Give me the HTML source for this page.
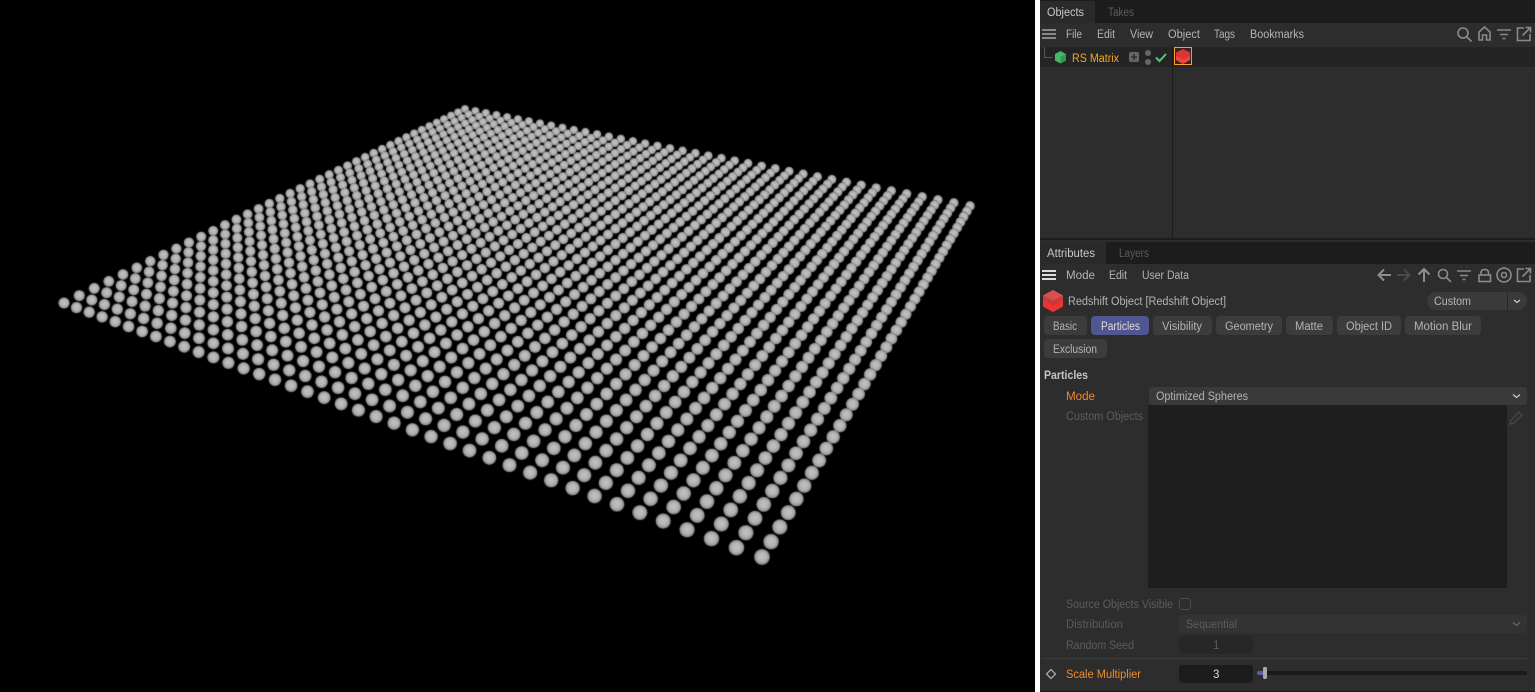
<!DOCTYPE html>
<html><head><meta charset="utf-8"><title>Redshift Matrix</title>
<style>
html,body{margin:0;padding:0;width:1535px;height:692px;overflow:hidden;background:#fff}
#c{position:absolute;left:0;top:0;width:1035px;height:692px;background:#000;display:block}
#p{position:absolute;left:1040px;top:0}
text{font-family:"Liberation Sans",sans-serif;font-size:11.5px;fill:#b4b4b4}
.d{fill:#5c5c5c}
.o{fill:#f08a2c}
.i{fill:none;stroke:#8a8a8a;stroke-width:1.6}
</style></head>
<body>
<canvas id="c" width="1035" height="692"></canvas>
<svg id="p" width="495" height="692" viewBox="1040 0 495 692" xmlns="http://www.w3.org/2000/svg">
<rect x="1040" y="0" width="495" height="692" fill="#2d2d2d"/>
<rect x="1040" y="0" width="495" height="23" fill="#1c1c1c"/>
<rect x="1040" y="1" width="55" height="22" fill="#2a2a2a"/>
<text x="1047" y="16" textLength="37" lengthAdjust="spacingAndGlyphs" style="fill:#c8c8c8">Objects</text>
<text x="1108" y="16" textLength="26" lengthAdjust="spacingAndGlyphs" class="d">Takes</text>
<rect x="1042" y="29" width="14" height="2" fill="#888"/><rect x="1042" y="33" width="14" height="2" fill="#888"/><rect x="1042" y="37" width="14" height="2" fill="#888"/>
<text x="1066" y="38" textLength="16" lengthAdjust="spacingAndGlyphs">File</text>
<text x="1097" y="38" textLength="18" lengthAdjust="spacingAndGlyphs">Edit</text>
<text x="1130" y="38" textLength="23" lengthAdjust="spacingAndGlyphs">View</text>
<text x="1168" y="38" textLength="32" lengthAdjust="spacingAndGlyphs">Object</text>
<text x="1214" y="38" textLength="21" lengthAdjust="spacingAndGlyphs">Tags</text>
<text x="1250" y="38" textLength="54" lengthAdjust="spacingAndGlyphs">Bookmarks</text>
<circle cx="1463" cy="33" r="5" class="i"/><path d="M1467 37l4.5 4.5" class="i" stroke-width="2"/>
<path d="M1479 40v-8l5.500-5 5.500 5v8h-3.500v-5h-4v5z" class="i"/>
<path d="M1497 30h14M1500 34.500h8M1502.500 38.500h3" class="i" stroke-width="2"/>
<path d="M1524 28h-6.500v12.500h12.500v-6.500M1522.500 35.500l8-8M1525.500 27.500h5v5" class="i"/>

<rect x="1040" y="47" width="495" height="20" fill="#242424"/>
<path d="M1044.500 47v10.500h8" fill="none" stroke="#555" stroke-width="1"/>
<path d="M1060.500 51l5.500 3v6.500l-5.500 3-5.500-3V54z" fill="#45b868"/><path d="M1060.500 57v6.500l5.500-3V54z" fill="#2f9a50"/>
<text x="1072" y="62" textLength="47" lengthAdjust="spacingAndGlyphs" style="fill:#f5a81f">RS Matrix</text>
<rect x="1129" y="52" width="10" height="10" rx="2" fill="#666"/><path d="M1134 54v6M1131 57h6" stroke="#2d2d2d" stroke-width="1.500"/>
<circle cx="1148" cy="53" r="3" fill="#666"/><circle cx="1148" cy="62" r="3" fill="#666"/>
<path d="M1156 57.500l3.500 3.500 6.500-7" fill="none" stroke="#53c878" stroke-width="2"/>
<rect x="1172" y="45" width="1" height="193" fill="#1c1c1c"/>
<rect x="1174.500" y="47.500" width="17" height="17" fill="#3a2418" stroke="#f0a030" stroke-width="1"/>
<path d="M1183 49l7 3.500v7.500l-7 4-7-4v-7.500z" fill="#d93535"/><path d="M1176 56l7 3.500 7-3.500v4l-7 4-7-4z" fill="#f04444"/>

<rect x="1040" y="238" width="495" height="2" fill="#1c1c1c"/>
<rect x="1040" y="242" width="495" height="22" fill="#1c1c1c"/>
<rect x="1040" y="242" width="66" height="22" fill="#2a2a2a"/>
<text x="1047" y="257" textLength="48" lengthAdjust="spacingAndGlyphs" style="fill:#c8c8c8">Attributes</text>
<text x="1119" y="257" textLength="30" lengthAdjust="spacingAndGlyphs" class="d">Layers</text>
<rect x="1042" y="270" width="14" height="2" fill="#ddd"/><rect x="1042" y="274" width="14" height="2" fill="#ddd"/><rect x="1042" y="278" width="14" height="2" fill="#ddd"/>
<text x="1066" y="279" textLength="29" lengthAdjust="spacingAndGlyphs">Mode</text>
<text x="1109" y="279" textLength="18" lengthAdjust="spacingAndGlyphs">Edit</text>
<text x="1142" y="279" textLength="47" lengthAdjust="spacingAndGlyphs">User Data</text>
<path d="M1391 275h-12M1384 269.500l-5.500 5.500 5.500 5.500" fill="none" stroke="#8f8f8f" stroke-width="2"/>
<path d="M1397 275h12M1404 269.500l5.500 5.500-5.500 5.500" fill="none" stroke="#4a4a4a" stroke-width="2"/>
<path d="M1424 282v-13M1418.500 274.500l5.500-5.500 5.500 5.500" fill="none" stroke="#8f8f8f" stroke-width="2"/>
<circle cx="1443" cy="274" r="4.500" class="i"/><path d="M1446.500 277.500l4.500 4.500" class="i" stroke-width="2"/>
<path d="M1457 271h14M1460 275.500h8M1462.500 279.500h3" class="i" stroke-width="2"/>
<rect x="1479" y="275" width="11.500" height="6.500" class="i"/><path d="M1481 275v-3a4 4 0 0 1 7.500 0v3" class="i"/>
<circle cx="1504" cy="275" r="7" class="i"/><circle cx="1504" cy="275" r="2.500" class="i"/>
<path d="M1524 269h-6.500v12.500h12.500v-6.500M1522.500 276.500l8-8M1525.500 268.500h5v5" class="i"/>

<path d="M1053 290l10 5.500v11l-10 5.500-10-5.500v-11z" fill="#c93a3a"/><path d="M1043 300l10 5.500 10-5.500v6.500l-10 5.500-10-5.500z" fill="#ee3333"/><path d="M1053 290l10 5.500-10 5-10-5z" fill="#d85050"/>
<text x="1068" y="305" textLength="158" lengthAdjust="spacingAndGlyphs">Redshift Object [Redshift Object]</text>
<rect x="1427" y="292" width="100" height="18" rx="9" fill="#3a3a3a"/><rect x="1507" y="292" width="1" height="18" fill="#262626"/>
<text x="1434" y="305" textLength="37" lengthAdjust="spacingAndGlyphs">Custom</text>
<path d="M1514 300l3 2.500 3-2.500" fill="none" stroke="#ccc" stroke-width="1.200"/>

<g fill="#3c3c3c">
<rect x="1044" y="316" width="43" height="19" rx="4"/>
<rect x="1091" y="316" width="58" height="19" rx="4" fill="#50568f"/>
<rect x="1153" y="316" width="59" height="19" rx="4"/>
<rect x="1216" y="316" width="66" height="19" rx="4"/>
<rect x="1286" y="316" width="47" height="19" rx="4"/>
<rect x="1337" y="316" width="64" height="19" rx="4"/>
<rect x="1405" y="316" width="76" height="19" rx="4"/>
<rect x="1044" y="339" width="63" height="19" rx="4"/>
</g>
<text x="1053" y="330" textLength="24" lengthAdjust="spacingAndGlyphs">Basic</text>
<text x="1101" y="330" textLength="39" lengthAdjust="spacingAndGlyphs" style="fill:#dcdcdc">Particles</text>
<text x="1162" y="330" textLength="40" lengthAdjust="spacingAndGlyphs">Visibility</text>
<text x="1225" y="330" textLength="48" lengthAdjust="spacingAndGlyphs">Geometry</text>
<text x="1295" y="330" textLength="28" lengthAdjust="spacingAndGlyphs">Matte</text>
<text x="1346" y="330" textLength="46" lengthAdjust="spacingAndGlyphs">Object ID</text>
<text x="1414" y="330" textLength="58" lengthAdjust="spacingAndGlyphs">Motion Blur</text>
<text x="1053" y="353" textLength="44" lengthAdjust="spacingAndGlyphs">Exclusion</text>

<text x="1044" y="379" textLength="44" lengthAdjust="spacingAndGlyphs" style="font-weight:bold;fill:#c4c4c4">Particles</text>
<text x="1066" y="400" textLength="29" lengthAdjust="spacingAndGlyphs" class="o">Mode</text>
<rect x="1149" y="387" width="378" height="18" rx="3" fill="#3a3a3a"/>
<text x="1156" y="400" textLength="92" lengthAdjust="spacingAndGlyphs">Optimized Spheres</text>
<path d="M1513 394.500l3.500 3 3.500-3" fill="none" stroke="#ccc" stroke-width="1.200"/>
<text x="1066" y="420" textLength="77" lengthAdjust="spacingAndGlyphs" class="d">Custom Objects</text>
<rect x="1148" y="405" width="359" height="183" fill="#1e1e1e"/>
<path d="M1511 420l8-8 3 3-8 8-4 1z" fill="none" stroke="#4a4a4a" stroke-width="1.200"/>

<text x="1066" y="608" textLength="107" lengthAdjust="spacingAndGlyphs" class="d">Source Objects Visible</text>
<rect x="1179.500" y="598.500" width="11" height="11" rx="2.500" fill="none" stroke="#4c4c4c"/>
<text x="1066" y="628" textLength="57" lengthAdjust="spacingAndGlyphs" class="d">Distribution</text>
<rect x="1179" y="615" width="348" height="18" rx="3" fill="#333"/>
<text x="1186" y="628" textLength="51" lengthAdjust="spacingAndGlyphs" class="d">Sequential</text>
<path d="M1513 622.500l3.500 3 3.500-3" fill="none" stroke="#666" stroke-width="1.200"/>
<text x="1066" y="649" textLength="68" lengthAdjust="spacingAndGlyphs" class="d">Random Seed</text>
<rect x="1179" y="636" width="74" height="18" rx="3" fill="#272727"/>
<text x="1213" y="649" class="d">1</text>
<rect x="1042" y="658" width="485" height="1" fill="#3c3c3c"/>
<path d="M1051 669.500l4.500 4.500-4.500 4.500-4.500-4.500z" fill="none" stroke="#a8a8a8" stroke-width="1.300"/>
<text x="1066" y="678" textLength="75" lengthAdjust="spacingAndGlyphs" class="o">Scale Multiplier</text>
<rect x="1179" y="665" width="74" height="18" rx="3" fill="#1c1c1c"/>
<text x="1213" y="678" style="fill:#ddd">3</text>
<rect x="1257" y="671" width="270" height="4" rx="2" fill="#1a1a1a"/>
<rect x="1257" y="671" width="7" height="4" rx="2" fill="#5a60a0"/>
<rect x="1263" y="667" width="4" height="12" rx="1.500" fill="#a8a8a8"/>
<rect x="1040" y="691" width="495" height="1" fill="#1a1a1a"/>
</svg>
<script>
(function(){
var ctx=document.getElementById('c').getContext('2d');
ctx.fillStyle='#000';ctx.fillRect(0,0,1035,692);
var x0=64,y0=303,x1=762,y1=557,x2=970,y2=206,x3=465,y3=109;
var dx1=x1-x2,dx2=x3-x2,sx=x0-x1+x2-x3,dy1=y1-y2,dy2=y3-y2,sy=y0-y1+y2-y3;
var den=dx1*dy2-dx2*dy1,g=(sx*dy2-dx2*sy)/den,h=(dx1*sy-sx*dy1)/den;
var a=x1-x0+g*x1,b=x3-x0+h*x3,d=y1-y0+g*y1,e=y3-y0+h*y3;
var N=39,pts=[],wB=1+g;
for(var i=0;i<=N;i++)for(var j=0;j<=N;j++){
 var u=i/N,v=j/N,w=g*u+h*v+1;
 pts.push({x:(a*u+b*v+x0)/w,y:(d*u+e*v+y0)/w,r:7.3*wB/w+0.7,w:w});
}
pts.sort(function(p,q){return q.w-p.w});
pts.forEach(function(p){
 var gr=ctx.createRadialGradient(p.x,p.y-p.r*0.1,0,p.x,p.y,p.r);
 gr.addColorStop(0,'#c2c2c2');
 gr.addColorStop(0.6,'#b2b2b2');
 gr.addColorStop(0.86,'#949494');
 gr.addColorStop(1,'#606060');
 ctx.fillStyle=gr;
 ctx.beginPath();ctx.arc(p.x,p.y,p.r,0,Math.PI*2);ctx.fill();
});
})();
</script>
</body></html>
